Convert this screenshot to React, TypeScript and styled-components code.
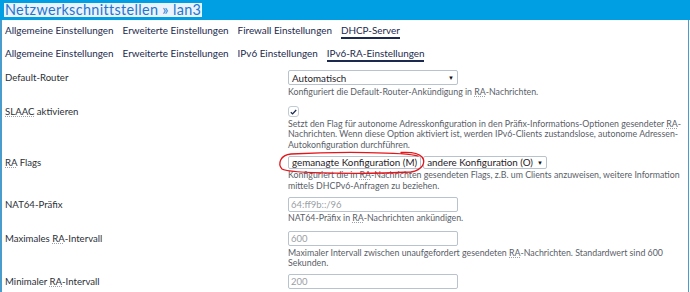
import React from "react";
import styled, { createGlobalStyle } from "styled-components";

const GlobalStyle = createGlobalStyle`
  html, body { margin: 0; padding: 0; background: #ffffff; }
  body { font-family: Lato, "Liberation Sans", sans-serif; }
  * { box-sizing: border-box; }
`;

const Page = styled.div`
  width: 690px;
  height: 292px;
  overflow: hidden;
  background: #fff;
`;

const Header = styled.div`
  height: 20px;
  background: #009fe3;
  padding: 3px 0 0 4px;
  display: flex;
  align-items: flex-start;
`;

const Title = styled.h2`
  margin: 0;
  font-family: Lato, sans-serif;
  font-weight: 400;
  font-size: 14.4px;
  letter-spacing: 0.35px;
  line-height: 14px;
  color: #1e77cf;
  background: #eaf3fd;
  padding: 0 1px;
`;

const Body = styled.div`
  width: 689px;
  height: 272px;
  border-left: 2px solid #4a9ccc;
  border-right: 1px solid #4a9ccc;
  padding-top: 4px;
`;

const TabBar = styled.div<{ $gapTop?: number }>`
  display: flex;
  gap: 9px;
  padding-left: 3px;
  margin-top: ${(p) => p.$gapTop ?? 0}px;
`;

const Tab = styled.span<{ $active?: boolean }>`
  font-size: 9.9px;
  line-height: 12px;
  color: #1b2a4e;
  padding-bottom: 1px;
  border-bottom: 2px solid ${(p) => (p.$active ? "#1b2a4e" : "transparent")};
  white-space: nowrap;
`;

const Form = styled.div`
  margin-top: 8px;
`;

const Row = styled.div<{ $mb?: number }>`
  display: grid;
  grid-template-columns: 283px 1fr;
  padding-left: 3px;
  margin-bottom: ${(p) => p.$mb ?? 5.5}px;
`;

const Label = styled.div<{ $h: number }>`
  font-size: 9.6px;
  line-height: ${(p) => p.$h}px;
  color: #2b2f36;
  white-space: nowrap;
`;

const Field = styled.div`
  display: flex;
  flex-direction: column;
  align-items: flex-start;
`;

const Abbr = styled.abbr`
  text-decoration: underline dotted #9aa3ad;
  text-underline-offset: 1px;
`;

const Desc = styled.div`
  margin-top: 1.5px;
  font-size: 8.8px;
  line-height: 10.5px;
  color: #5a6068;
  white-space: nowrap;
`;

const SelectBox = styled.div<{ $w?: number; $h: number }>`
  width: ${(p) => (p.$w ? `${p.$w}px` : "auto")};
  height: ${(p) => p.$h}px;
  border: 1px solid #b8c3cf;
  border-radius: 2px;
  background: #fff;
  display: flex;
  align-items: center;
  justify-content: space-between;
  gap: 4px;
  padding: 0 3px;
  font-size: 9.8px;
  color: #1f2328;
  white-space: nowrap;
`;

const Caret = styled.span`
  font-size: 6px;
  color: #111;
`;

const MultiWrap = styled.div`
  position: relative;
  display: flex;
  gap: 2px;
`;

const Annotation = styled.svg`
  position: absolute;
  left: -11px;
  top: -6px;
  width: 150px;
  height: 25px;
  overflow: visible;
  pointer-events: none;
`;

const TextInput = styled.input`
  width: 170px;
  height: 15px;
  border: 1px solid #b8c3cf;
  border-radius: 2px;
  padding: 0 2px;
  font-family: Lato, sans-serif;
  font-size: 9.5px;
  color: #1f2328;
  outline: none;
  &::placeholder { color: #9a9fa6; }
`;

const Check = styled.div`
  width: 11px;
  height: 11px;
  border: 1px solid #c2cad4;
  border-radius: 3px;
  background: #fff;
  display: flex;
  align-items: center;
  justify-content: center;
`;

const RA = () => <Abbr title="Router Advertisement">RA</Abbr>;

export default function App() {
  return (
    <Page>
      <GlobalStyle />
      <Header>
        <Title>Netzwerkschnittstellen » lan3</Title>
      </Header>
      <Body>
        <TabBar>
          <Tab>Allgemeine Einstellungen</Tab>
          <Tab>Erweiterte Einstellungen</Tab>
          <Tab>Firewall Einstellungen</Tab>
          <Tab $active>DHCP-Server</Tab>
        </TabBar>
        <TabBar $gapTop={8}>
          <Tab>Allgemeine Einstellungen</Tab>
          <Tab>Erweiterte Einstellungen</Tab>
          <Tab>IPv6 Einstellungen</Tab>
          <Tab $active>IPv6-RA-Einstellungen</Tab>
        </TabBar>
        <Form>
          <Row $mb={9}>
            <Label $h={15}>Default-Router</Label>
            <Field>
              <SelectBox $w={170} $h={15}>
                <span>Automatisch</span>
                <Caret>▼</Caret>
              </SelectBox>
              <Desc>
                Konfiguriert die Default-Router-Ankündigung in <RA />-Nachrichten.
              </Desc>
            </Field>
          </Row>
          <Row>
            <Label $h={11}>
              <Abbr>SLAAC</Abbr> aktivieren
            </Label>
            <Field>
              <Check>
                <svg width="7" height="6" viewBox="0 0 7 6">
                  <path d="M0.8 3.2 L2.6 4.9 L6.2 1" fill="none" stroke="#1b2a4e" strokeWidth="1.3" />
                </svg>
              </Check>
              <Desc>
                <div>
                  Setzt den Flag für autonome Adresskonfiguration in den Präfix-Informations-Optionen gesendeter <RA />-
                </div>
                <div>
                  Nachrichten. Wenn diese Option aktiviert ist, werden IPv6-Clients zustandslose, autonome Adressen-
                </div>
                <div>Autokonfiguration durchführen.</div>
              </Desc>
            </Field>
          </Row>
          <Row>
            <Label $h={13}>
              <RA /> Flags
            </Label>
            <Field>
              <MultiWrap>
                <SelectBox $h={13}>
                  <span>gemanagte Konfiguration (M)</span>
                </SelectBox>
                <SelectBox $h={13}>
                  <span>andere Konfiguration (O)</span>
                  <Caret>▼</Caret>
                </SelectBox>
                <Annotation viewBox="0 0 150 25">
                  <path
                    d="M141 6 C 128 2, 60 1.5, 14 4 C 3 5, 0.5 14, 5 19 C 12 24, 95 24, 134 22 C 146 20, 149 12, 145 7 C 141 2.5, 132 2, 124 2.5"
                    fill="none"
                    stroke="#e3161b"
                    strokeWidth="1.3"
                    strokeLinecap="round"
                  />
                </Annotation>
              </MultiWrap>
              <Desc>
                <div>
                  Konfiguriert die in <RA />-Nachrichten gesendeten Flags, z.B. um Clients anzuweisen, weitere Information
                </div>
                <div>mittels DHCPv6-Anfragen zu beziehen.</div>
              </Desc>
            </Field>
          </Row>
          <Row $mb={7.5}>
            <Label $h={15}>NAT64-Präfix</Label>
            <Field>
              <TextInput placeholder="64:ff9b::/96" readOnly />
              <Desc>
                NAT64-Präfix in <RA />-Nachrichten ankündigen.
              </Desc>
            </Field>
          </Row>
          <Row>
            <Label $h={15}>
              Maximales <RA />-Intervall
            </Label>
            <Field>
              <TextInput placeholder="600" readOnly />
              <Desc>
                <div>
                  Maximaler Intervall zwischen unaufgefordert gesendeten <RA />-Nachrichten. Standardwert sind 600
                </div>
                <div>Sekunden.</div>
              </Desc>
            </Field>
          </Row>
          <Row>
            <Label $h={15}>
              Minimaler <RA />-Intervall
            </Label>
            <Field>
              <TextInput placeholder="200" readOnly />
            </Field>
          </Row>
        </Form>
      </Body>
    </Page>
  );
}
